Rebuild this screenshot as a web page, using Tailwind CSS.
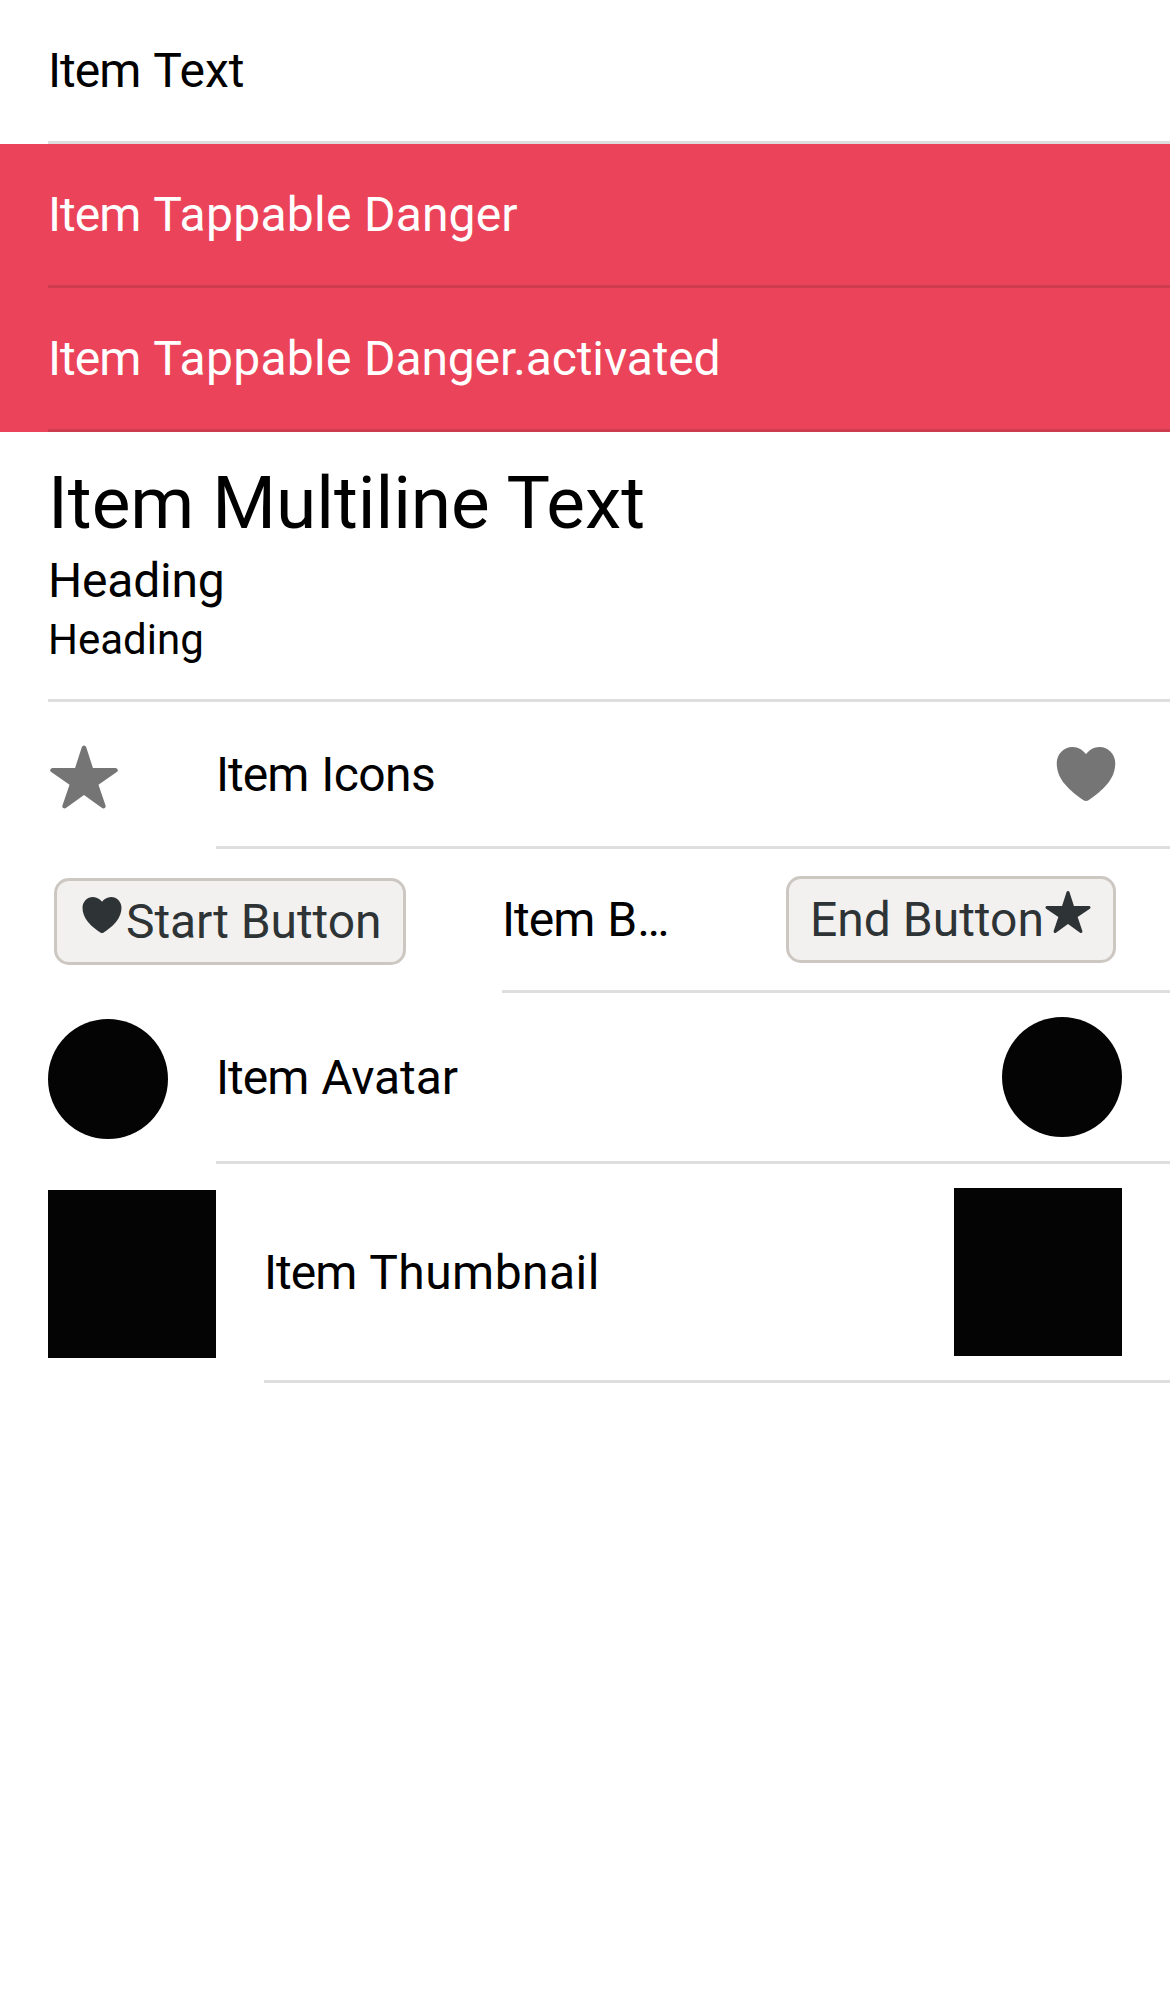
<!DOCTYPE html>
<html lang="en">
<head>
<meta charset="utf-8">
<title>Item</title>
<script src="https://cdn.jsdelivr.net/npm/@tailwindcss/browser@4"></script>
</head>
<body class="bg-white text-black font-[Roboto,sans-serif] text-[48px] leading-[56px]">
<svg class="hidden">
  <symbol id="star" viewBox="0 0 512 512"><path d="M394 480a16 16 0 01-9.39-3L256 383.76 127.39 477a16 16 0 01-24.55-18.08L153 310.35 23 221.2a16 16 0 019-29.2h160.38l48.4-148.95a16 16 0 0130.44 0l48.4 149H480a16 16 0 019.05 29.2L359 310.35l50.13 148.53A16 16 0 01394 480z"/></symbol>
  <symbol id="heart" viewBox="0 0 512 512"><path d="M256 448a32 32 0 01-18-5.57c-78.59-53.35-112.62-89.93-131.39-112.8-40-48.75-59.15-98.8-58.61-153C48.63 114.52 98.46 64 159.08 64c44.08 0 74.61 24.83 92.39 45.51a6 6 0 009.06 0C278.31 88.81 308.84 64 352.92 64c60.62 0 110.45 50.52 111.08 112.64.54 54.21-18.63 104.26-58.61 153-18.77 22.87-52.8 59.45-131.39 112.8A32 32 0 01256 448z"/></symbol>
</svg>
<main class="flex flex-col">
  <div class="h-36 pl-12">
    <div class="h-full border-b-[3px] border-[#dedede] flex items-center"><p><span class="tracking-[-1px] [word-spacing:2px]">Item </span>Text</p></div>
  </div>
  <div class="h-36 pl-12 bg-[#eb445a] text-white">
    <div class="h-full border-b-[3px] border-[#cf3c4f] flex items-center"><p><span class="tracking-[-1px] [word-spacing:2px]">Item </span><span class="tracking-[0.3px]">Tappable </span><span class="tracking-[0.15px]">Danger</span></p></div>
  </div>
  <div class="h-36 pl-12 bg-[#eb445a] text-white">
    <div class="h-full border-b-[3px] border-[#cf3c4f] flex items-center"><p><span class="tracking-[-1px] [word-spacing:2px]">Item </span><span class="tracking-[0.3px]">Tappable </span><span class="tracking-[-0.12px]">Danger.activated</span></p></div>
  </div>
  <div class="h-[270px] pl-12">
    <div class="h-full border-b-[3px] border-[#dedede] pt-[29px]">
      <h1 class="text-[73px] leading-[84px] tracking-[-0.05px]">Item Multiline Text</h1>
      <h2 class="mt-[8px] tracking-[-0.2px]">Heading</h2>
      <h3 class="text-[42px] leading-[49px] mt-[6px]">Heading</h3>
    </div>
  </div>
  <div class="h-[147px] pl-12 flex">
    <svg class="size-[72px] mt-[39px] mr-24 shrink-0 fill-[#757575]"><use href="#star"/></svg>
    <div class="flex-1 border-b-[3px] border-[#dedede] flex items-center justify-between pr-12">
      <p class="pt-[2px]"><span class="tracking-[-1px] [word-spacing:2px]">Item </span><span class="tracking-[-0.6px]">Icons</span></p>
      <svg class="size-[72px] fill-[#757575]"><use href="#heart"/></svg>
    </div>
  </div>
  <div class="h-36 pl-[54px] flex">
    <button class="mt-[29px] mr-24 w-[352px] h-[87px] shrink-0 rounded-[15px] border-[3px] border-[#cdc7c2] bg-[#f3f1f0] text-[#2e3436] px-[21px] flex items-start pt-[10px] whitespace-nowrap">
      <svg class="size-12 shrink-0 fill-current"><use href="#heart"/></svg><span class="mt-[3px] tracking-[-0.1px]">Start Button</span>
    </button>
    <div class="flex-1 min-w-0 border-b-[3px] border-[#dedede] flex items-start justify-between pr-[54px]">
      <p class="mt-[43px] w-[186px] truncate"><span class="tracking-[-1px] [word-spacing:2px]">Item </span>Buttons</p>
      <button class="mt-[27px] w-[330px] h-[87px] shrink-0 rounded-[15px] border-[3px] border-[#cdc7c2] bg-[#f3f1f0] text-[#2e3436] px-[21px] flex items-start justify-between pt-[9px] whitespace-nowrap">
        <span class="mt-[4px]">End Button</span><svg class="size-12 shrink-0 fill-current"><use href="#star"/></svg>
      </button>
    </div>
  </div>
  <div class="h-[171px] pl-12 flex">
    <div class="size-[120px] mt-[26px] mr-12 shrink-0 rounded-full bg-[#040404]"></div>
    <div class="flex-1 border-b-[3px] border-[#dedede] flex items-center justify-between pr-12">
      <p class="pt-[2px]"><span class="tracking-[-1px] [word-spacing:2px]">Item </span><span class="tracking-[-0.1px]">Avatar</span></p>
      <div class="size-[120px] rounded-full bg-[#040404]"></div>
    </div>
  </div>
  <div class="h-[219px] pl-12 flex">
    <div class="size-[168px] mt-[26px] mr-12 shrink-0 bg-[#040404]"></div>
    <div class="flex-1 border-b-[3px] border-[#dedede] flex items-center justify-between pr-12">
      <p class="pt-[2px]"><span class="tracking-[-1px] [word-spacing:2px]">Item </span><span class="tracking-[0.45px]">Thumbnail</span></p>
      <div class="size-[168px] bg-[#040404]"></div>
    </div>
  </div>
</main>
</body>
</html>
